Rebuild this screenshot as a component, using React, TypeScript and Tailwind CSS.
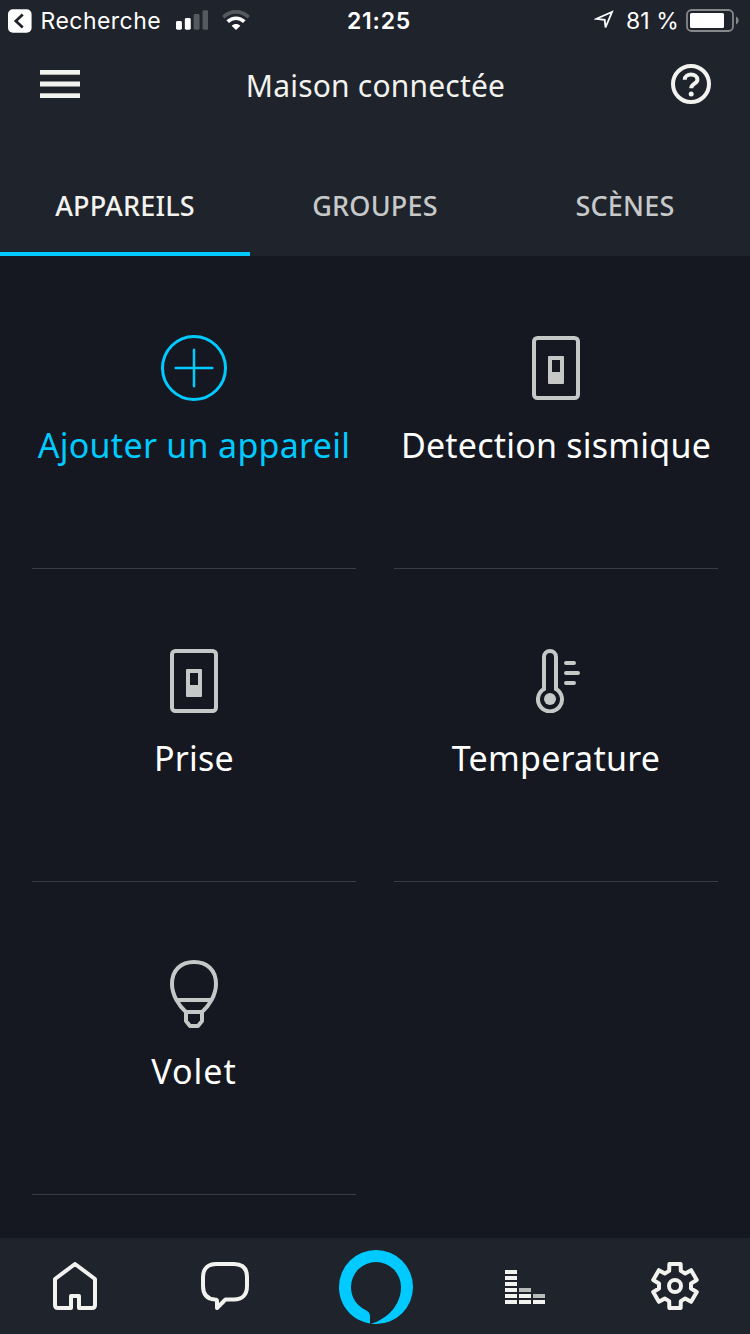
import type { ReactNode } from "react";

const ember = "font-['Noto_Sans','Open_Sans',sans-serif]";

const gearPoints = Array.from({ length: 6 }, (_, tooth) =>
  [
    [22.6, -14.5],
    [22.6, 14.5],
    [16.2, 21],
    [16.2, 39],
  ].map(([radius, offset]) => {
    const angle = ((tooth * 60 + offset) * Math.PI) / 180;
    return `${(24 + radius * Math.sin(angle)).toFixed(2)},${(24 - radius * Math.cos(angle)).toFixed(2)}`;
  }),
)
  .flat()
  .join(" ");

function StatusBar() {
  return (
    <div className="flex h-10 items-center font-['Inter',sans-serif] text-[23px] leading-10 text-white">
      <div className="flex w-[250px] items-center pl-2">
        <svg className="mt-[1px] block" width="24" height="24" viewBox="0 0 24 24" fill="none">
          <rect width="24" height="24" rx="5" fill="#fff" />
          <path d="M15 5.500 8 12l7 6.500" stroke="#1f232b" strokeWidth="2.800" />
        </svg>
        <span className="ml-[9px] w-[119px] whitespace-nowrap pt-[2px] leading-[38px] tracking-[0.45px]">Recherche</span>
        <svg className="ml-4 block" width="33" height="20" viewBox="0 0 33 20">
          <rect x="0" y="11" width="6" height="9" rx="1.500" fill="#fff" />
          <rect x="9" y="8" width="6" height="12" rx="1.500" fill="#fff" />
          <rect x="18" y="4" width="6" height="16" rx="1.500" fill="#565960" />
          <rect x="27" y="0" width="6" height="20" rx="1.500" fill="#565960" />
        </svg>
        <svg className="ml-[14px] block shrink-0" width="28" height="20" viewBox="0 0 28 20" fill="none">
          <path d="M1.300 7.300C8.500.1 19.500.1 26.700 7.300" stroke="#565960" strokeWidth="3.700" />
          <path d="M5.700 11.700c4.800-4.600 11.800-4.600 16.600 0" stroke="#fff" strokeWidth="3.700" />
          <path d="M9.600 15.700c2.600-2.300 6.200-2.300 8.800 0L14 20z" fill="#fff" />
        </svg>
      </div>
      <div className="w-[258px] pt-[2px] text-center font-semibold leading-[38px] tracking-[0.8px]">21:25</div>
      <div className="flex w-[242px] items-center justify-end pr-[11px]">
        <svg className="mr-[12px] block" width="20" height="20" viewBox="0 0 20 20" fill="none">
          <path d="M2.500 8.800 18 2l-6.500 15.500-.8-7.700z" stroke="#fff" strokeWidth="1.800" />
        </svg>
        <span className="whitespace-nowrap pt-[2px] leading-[38px] tracking-[0.1px]">81 %</span>
        <svg className="ml-[7px] block" width="53" height="23" viewBox="0 0 53 23">
          <rect x="1" y="1" width="46" height="21" rx="4.500" fill="none" stroke="#85878b" strokeWidth="1.800" />
          <rect x="4" y="4" width="34" height="15" rx="1.500" fill="#fff" />
          <path d="M50 7.500c3.500 1.500 3.500 6.500 0 8z" fill="#85878b" />
        </svg>
      </div>
    </div>
  );
}

function TitleBar() {
  return (
    <div className="flex h-[88px] items-center justify-between pl-10 pr-[39px]">
      <svg className="block" width="40" height="28" viewBox="0 0 40 28" fill="#f2f2ef">
        <rect y="0" width="40" height="4.700" />
        <rect y="11.500" width="40" height="5" />
        <rect y="23.300" width="40" height="4.700" />
      </svg>
      <h1 className="mt-[2px] whitespace-nowrap text-[30px] tracking-[0.2px] text-[#f2f2ef]">Maison connectée</h1>
      <svg className="block" width="40" height="40" viewBox="0 0 40 40" fill="none" stroke="#f2f2ef">
        <circle cx="20" cy="20" r="18" strokeWidth="4" />
        <path d="M13.700 15.700c0-7 12.700-7 12.700 0 0 4-6.200 4-6.200 8.500" strokeWidth="4" />
        <circle cx="20.200" cy="30" r="2.500" fill="#f2f2ef" stroke="none" />
      </svg>
    </div>
  );
}

function Tabs() {
  return (
    <div className="grid h-32 grid-cols-3 text-center text-[27px] font-medium tracking-[0.2px]">
      <div className="flex items-center justify-center border-b-4 border-[#00caff] pt-8 text-[#f2f2ef]">
        <span>APPAREILS</span>
      </div>
      <div className="flex items-center justify-center border-b-4 border-transparent pt-8 text-[#c7c9c9]">
        <span>GROUPES</span>
      </div>
      <div className="flex items-center justify-center border-b-4 border-transparent pt-8 text-[#c7c9c9]">
        <span>SCÈNES</span>
      </div>
    </div>
  );
}

function AddIcon() {
  return (
    <svg width="68" height="68" viewBox="0 0 68 68" fill="none" stroke="#00caff">
      <circle cx="34" cy="34" r="31.500" strokeWidth="3" />
      <path d="M34 15.700v36.600M15.700 34h36.600" strokeWidth="2.500" strokeLinecap="round" />
    </svg>
  );
}

function SwitchIcon() {
  return (
    <svg width="48" height="64" viewBox="0 0 48 64" fill="none" stroke="#c5c8c6" strokeWidth="4">
      <rect x="2" y="2" width="44" height="60" rx="3.500" />
      <path d="M16 21q0-1 1-1h14q1 0 1 1v26q0 1-1 1H17q-1 0-1-1zM20 24v12h8V24z" fill="#c5c8c6" fillRule="evenodd" stroke="none" />
    </svg>
  );
}

function ThermometerIcon() {
  return (
    <svg width="48" height="64" viewBox="-4 0 48 64" fill="none" stroke="#c5c8c6" strokeWidth="4">
      <path d="M8 40V8a6 6 0 0 1 12 0v32a12 12 0 1 1-12 0z" />
      <circle cx="14" cy="50" r="6" fill="#c5c8c6" stroke="none" />
      <path d="M30 14h8M30 24h12M30 34h8" strokeLinecap="round" />
    </svg>
  );
}

function BulbIcon() {
  return (
    <svg width="48" height="68" viewBox="0 0 48 68" fill="none" stroke="#c5c8c6" strokeWidth="4" strokeLinejoin="round">
      <path d="M16 52C9 46 2 35 2 24 2 10 11 2 24 2s22 8 22 22c0 11-7 22-14 28zM7 40h34" />
      <path d="M16 52v9l4 5h8l4-5v-9" />
    </svg>
  );
}

function Device({ icon, label, accent = false }: { icon: ReactNode; label: ReactNode; accent?: boolean }) {
  return (
    <div className="flex h-[313px] flex-col items-center border-b border-[#393b48]">
      <div className="mt-[78px] flex h-[68px] items-center">{icon}</div>
      <div
        className={
          accent
            ? "mt-[19px] whitespace-nowrap text-[34px] leading-[48px] tracking-[0.28px] text-[#00caff]"
            : "mt-[19px] whitespace-nowrap text-[34px] leading-[48px] tracking-[0.22px] text-white"
        }
      >
        {label}
      </div>
    </div>
  );
}

function BottomNav() {
  return (
    <nav className="grid h-24 grid-cols-5 place-items-center bg-[#1f232b]">
      <svg width="48" height="48" viewBox="0 0 48 48" fill="none" stroke="#f2f2ef" strokeWidth="4" strokeLinejoin="round">
        <path d="M20 46H7q-3 0-3-3V17L24 2l20 15v26q0 3-3 3H28V34h-8z" />
        <path d="M22 36h4v12h-4z" fill="#1f232b" stroke="none" />
      </svg>
      <svg width="48" height="48" viewBox="0 0 48 48" fill="none" stroke="#f2f2ef" strokeWidth="4" strokeLinejoin="round">
        <path d="M15 2h18c9 0 13 5 13 13v9c0 9-5 13.500-13 13.500h-8.500L16 46v-7q0-1.500-2-1.500C6 37 2 32 2 24v-9C2 7 7 2 15 2z" />
      </svg>
      <svg className="ml-[2px] mt-[2px]" width="74" height="74" viewBox="0 0 74 74" fill="#00caff">
        <path d="M31 73.500C13 70.500 0 55.500 0 37a37 37 0 1 1 37 37h-5c18-6 30-20 30-37A25 25 0 0 0 12 37c0 11 6 18.500 14.500 23q4.500 2 4.500 6z" />
      </svg>
      <svg className="mt-[2px]" width="40" height="34" viewBox="0 0 40 34" fill="#f2f2ef">
        <path d="M0 0h12v4H0zM0 6h12v4H0zM0 12h12v4H0zM0 18h12v4H0zM0 24h12v4H0zM0 30h12v4H0zM14 24h12v4H14zM14 30h12v4H14zM28 30h12v4H28z" />
        <path d="M14 18h12v4H14zM28 24h12v4H28z" fill="#b9bbbb" />
      </svg>
      <svg width="48" height="48" viewBox="0 0 48 48" fill="none" stroke="#f2f2ef" strokeWidth="4" strokeLinejoin="round">
        <polygon points={gearPoints} />
        <circle cx="24" cy="24" r="6" />
      </svg>
    </nav>
  );
}

export default function App() {
  return (
    <div className={`${ember} flex h-[1334px] w-[750px] flex-col overflow-hidden bg-[#151820]`}>
      <header className="h-64 shrink-0 bg-[#1f232b]">
        <StatusBar />
        <TitleBar />
        <Tabs />
      </header>
      <main className="grid flex-1 grid-cols-2 content-start gap-x-[38px] px-8">
        <Device icon={<AddIcon />} label={<span>Ajouter un appareil</span>} accent />
        <Device icon={<SwitchIcon />} label={<span>Detection sismique</span>} />
        <Device icon={<SwitchIcon />} label={<span>Prise</span>} />
        <Device icon={<ThermometerIcon />} label={<span>Temperature</span>} />
        <Device icon={<BulbIcon />} label={<span className="tracking-[1px]">Volet</span>} />
      </main>
      <BottomNav />
    </div>
  );
}
